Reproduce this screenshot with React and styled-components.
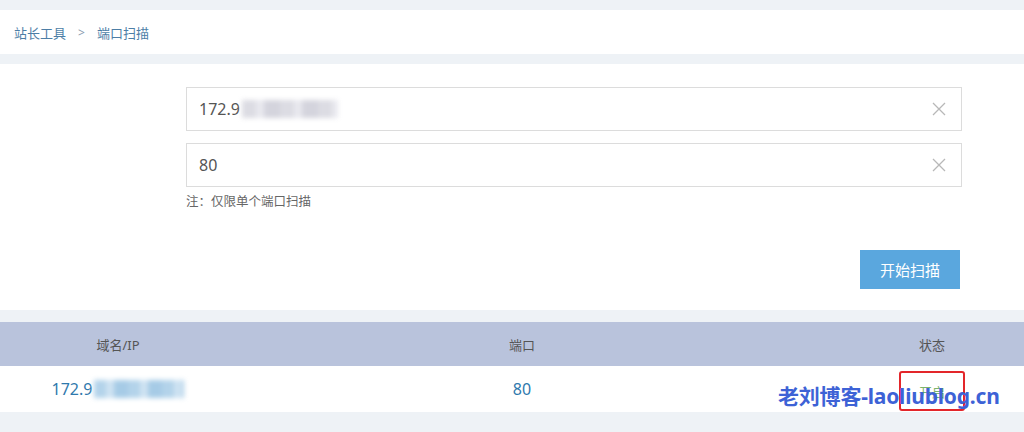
import React from 'react'
import styled, { createGlobalStyle } from 'styled-components'

const GlobalStyle = createGlobalStyle`
  html, body {
    margin: 0;
    padding: 0;
    background: #eef2f6;
    font-family: "Noto Sans", "Noto Sans CJK SC", sans-serif;
  }
`

const ClearIcon = () => (
  <svg width="16" height="16" viewBox="0 0 16 16">
    <path d="M2 2 L14 14 M14 2 L2 14" stroke="#b8b8b8" strokeWidth="1.3" fill="none" />
  </svg>
)

const App = () => {
  return <Page>
    <GlobalStyle />
    <Breadcrumb>
      <Crumb>站长工具</Crumb>
      <Sep>&gt;</Sep>
      <Crumb>端口扫描</Crumb>
    </Breadcrumb>

    <Panel>
      <Field>
        <Value>172.9</Value>
        <Blur tone="gray" width={96} />
        <Clear><ClearIcon /></Clear>
      </Field>
      <Field>
        <Value>80</Value>
        <Clear><ClearIcon /></Clear>
      </Field>
      <Note>注：仅限单个端口扫描</Note>
      <Actions>
        <ScanButton>开始扫描</ScanButton>
      </Actions>
    </Panel>

    <Table>
      <HeadRow>
        <Cell>域名/IP</Cell>
        <Cell>端口</Cell>
        <Cell last>状态</Cell>
      </HeadRow>
      <BodyRow>
        <Cell link>172.9<Blur tone="blue" width={90} /></Cell>
        <Cell link>80</Cell>
        <Cell last><Status>开启</Status></Cell>
      </BodyRow>
      <Watermark>老刘博客-laoliublog.cn</Watermark>
    </Table>
  </Page>
}

export default App

const Page = styled.div`
  width: 1024px;
  height: 432px;
  overflow: hidden;
  padding-top: 10px;
  box-sizing: border-box;
  background: #eef2f6;
`

const Breadcrumb = styled.div`
  height: 44px;
  background: #fff;
  display: flex;
  align-items: center;
  padding-left: 14px;
  gap: 10px;
  font-size: 13px;
  color: #4d7ea6;
  margin-bottom: 10px;
`

const Crumb = styled.span``

const Sep = styled.span`
  color: #8a9cb0;
  font-size: 12px;
  margin: 0 2px;
`

const Panel = styled.div`
  background: #fff;
  padding: 23px 62px 21px 186px;
  display: flex;
  flex-direction: column;
  margin-bottom: 12px;
`

const Field = styled.div`
  height: 44px;
  box-sizing: border-box;
  border: 1px solid #dcdcdc;
  display: flex;
  align-items: center;
  padding: 0 14px 0 12px;
  margin-bottom: 12px;
  font-size: 16px;
  color: #555;

  & + & {
    margin-bottom: 6px;
  }
`

const Value = styled.span``

const Blur = styled.span`
  display: inline-block;
  width: ${p => p.width}px;
  height: 18px;
  margin-left: 2px;
  vertical-align: middle;
  background: ${p => p.tone === 'blue'
    ? 'repeating-linear-gradient(90deg, #b3d3ea 0 12px, #cfe3f2 12px 20px, #a6cbe6 20px 34px)'
    : 'repeating-linear-gradient(90deg, #dcdce3 0 14px, #e9e9ef 14px 22px, #d4d4dd 22px 38px)'};
  filter: blur(2.5px);
`

const Clear = styled.span`
  margin-left: auto;
  display: flex;
`

const Note = styled.div`
  font-size: 12.5px;
  color: #666;
  height: 18px;
  line-height: 18px;
`

const Actions = styled.div`
  display: flex;
  justify-content: flex-end;
  margin-top: 39px;
`

const ScanButton = styled.button`
  width: 100px;
  height: 39px;
  margin-right: 2px;
  border: none;
  background: #5aa7de;
  color: #fff;
  font-size: 15px;
  font-family: inherit;
  cursor: pointer;
`

const Table = styled.div`
  position: relative;
  background: #fff;
`

const HeadRow = styled.div`
  display: grid;
  grid-template-columns: 236px 572px 1fr;
  height: 44px;
  align-items: center;
  background: #b9c3dc;
  color: #555;
  font-size: 13px;
`

const BodyRow = styled.div`
  display: grid;
  grid-template-columns: 236px 572px 1fr;
  height: 46px;
  align-items: center;
  font-size: 16px;
`

const Cell = styled.div`
  display: flex;
  justify-content: center;
  align-items: center;
  color: ${p => p.link ? '#2f79ad' : 'inherit'};
  padding-left: ${p => p.last ? '32px' : '0'};
`

const Status = styled.span`
  display: flex;
  align-items: center;
  justify-content: center;
  width: 62px;
  height: 36px;
  border: 2.5px solid #e3262a;
  border-radius: 3px;
  font-size: 13px;
  color: #7cb46c;
  margin-top: 4px;
`

const Watermark = styled.div`
  position: absolute;
  left: 778px;
  top: 58px;
  font-size: 21px;
  font-weight: 700;
  color: #3d62d6;
  letter-spacing: -0.2px;
  white-space: nowrap;
`
